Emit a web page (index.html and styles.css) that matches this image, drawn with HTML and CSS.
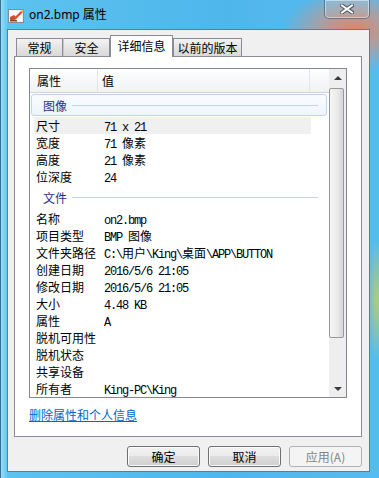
FILE: index.html
```html
<!DOCTYPE html>
<html lang="zh-CN">
<head>
    <meta charset="UTF-8">
    <title>on2.bmp 属性</title>
    <link rel="stylesheet" href="styles.css">
</head>
<body>
    <div class="window">
        <!-- Title bar -->
        <div class="titlebar">
            <svg class="app-icon" width="16" height="16" viewBox="0 0 16 16">
                <rect x="0.5" y="1.5" width="15" height="13" fill="#efefef" stroke="#8c8c8c"/>
                <rect x="2" y="3" width="12" height="10" fill="#fbfbfb"/>
                <path d="M2 13 L2 9 L6 7 L9 10 L4 13 Z" fill="#c9542c"/>
                <path d="M5 11 L13 3 L14.5 4.5 L7 12 Z" fill="#e0482a"/>
                <path d="M13 3 L14.5 1.5 L15.5 2.5 L14.5 4.5 Z" fill="#f2b233"/>
                <rect x="2" y="12" width="7" height="1.5" fill="#8a4a22"/>
            </svg>
            <span class="title">on2.bmp 属性</span>
            <div class="close">
                <svg width="14" height="10" viewBox="0 0 14 10">
                    <path d="M2 1.5 L12 8.5 M12 1.5 L2 8.5" stroke="#4d5660" stroke-width="4" stroke-linecap="square"/>
                    <path d="M2 1.5 L12 8.5 M12 1.5 L2 8.5" stroke="#ffffff" stroke-width="2" stroke-linecap="square"/>
                </svg>
            </div>
        </div>

        <div class="client">
            <!-- Tabs -->
            <div class="tabs">
                <div class="tab t1">常规</div>
                <div class="tab t2">安全</div>
                <div class="tab active">详细信息</div>
                <div class="tab t4">以前的版本</div>
            </div>

            <div class="panel">
                <div class="listbox">
                    <div class="list">
                        <div class="head">
                            <div class="col-name">属性</div>
                            <div class="col-val">值</div>
                            <div class="col-rest"></div>
                        </div>

                        <div class="group boxed"><span>图像</span><i></i></div>
                        <div class="row hover"><div class="k">尺寸</div><div class="v"><span class="en">71 x 21</span></div></div>
                        <div class="row"><div class="k">宽度</div><div class="v"><span class="en">71 </span>像素</div></div>
                        <div class="row"><div class="k">高度</div><div class="v"><span class="en">21 </span>像素</div></div>
                        <div class="row"><div class="k">位深度</div><div class="v"><span class="en">24</span></div></div>

                        <div class="group gap"><span>文件</span><i></i></div>
                        <div class="row"><div class="k">名称</div><div class="v"><span class="en">on2.bmp</span></div></div>
                        <div class="row"><div class="k">项目类型</div><div class="v"><span class="en">BMP </span>图像</div></div>
                        <div class="row"><div class="k">文件夹路径</div><div class="v"><span class="en">C:\</span>用户<span class="en">\King\</span>桌面<span class="en">\APP\BUTTON</span></div></div>
                        <div class="row"><div class="k">创建日期</div><div class="v"><span class="en">2016/5/6 21:05</span></div></div>
                        <div class="row"><div class="k">修改日期</div><div class="v"><span class="en">2016/5/6 21:05</span></div></div>
                        <div class="row"><div class="k">大小</div><div class="v"><span class="en">4.48 KB</span></div></div>
                        <div class="row"><div class="k">属性</div><div class="v"><span class="en">A</span></div></div>
                        <div class="row"><div class="k">脱机可用性</div><div class="v"></div></div>
                        <div class="row"><div class="k">脱机状态</div><div class="v"></div></div>
                        <div class="row"><div class="k">共享设备</div><div class="v"></div></div>
                        <div class="row"><div class="k">所有者</div><div class="v"><span class="en">King-PC\King</span></div></div>
                    </div>

                    <div class="scrollbar">
                        <div class="arrow"><b class="up"></b></div>
                        <div class="thumb"></div>
                        <div class="track"></div>
                        <div class="arrow"><b class="down"></b></div>
                    </div>
                </div>
                <a class="link" href="#">删除属性和个人信息</a>
            </div>

            <!-- Dialog buttons -->
            <div class="buttons">
                <button class="btn">确定</button>
                <button class="btn">取消</button>
                <button class="btn disabled">应用(A)</button>
            </div>
        </div>
    </div>
</body>
</html>
```

FILE: styles.css
```css
body {
    margin: 0;
    padding: 0;
    font-family: "Noto Sans CJK SC", "Noto Sans", sans-serif;
    font-size: 12px;
    color: #000;
}

.window {
    width: 379px;
    height: 478px;
    box-sizing: border-box;
    overflow: hidden;
    border-left: 1px solid #3c6f90;
    background:
        radial-gradient(70px 40px at 352px 30px, rgba(230, 128, 98, 0.95) 0%, rgba(232, 140, 108, 0.6) 45%, rgba(232, 140, 108, 0) 100%),
        radial-gradient(10px 60px at 376px 300px, rgba(200, 210, 90, 0.8), rgba(200, 210, 90, 0)),
        linear-gradient(to right, #8fe0f6 0px, #5cc2ef 7px, #4fb6ec 60%, #58bbee 100%);
}

/* title bar */

.titlebar {
    height: 29px;
    display: flex;
    align-items: flex-start;
}

.app-icon {
    margin: 8px 0 0 7px;
}

.title {
    margin: 6px 0 0 5px;
    font-family: "Noto Sans", "Noto Sans CJK SC", sans-serif;
    font-size: 12px;
    line-height: 17px;
    color: #000;
}

.close {
    margin-left: auto;
    margin-right: 9px;
    width: 44px;
    height: 18px;
    border: 1px solid rgba(40, 70, 100, 0.55);
    border-top: none;
    border-radius: 0 0 5px 5px;
    box-shadow: inset 0 0 0 1px rgba(255, 255, 255, 0.45);
    background: linear-gradient(rgba(255, 255, 255, 0.15), rgba(255, 255, 255, 0.05));
    display: flex;
    align-items: center;
    justify-content: center;
}

/* client area */

.client {
    width: 363px;
    height: 443px;
    box-sizing: border-box;
    margin-left: 6px;
    border: 1px solid #6c7985;
    background-color: #f0f0f0;
    padding: 5px 7px 0 6px;
}

.tabs {
    display: flex;
    align-items: flex-end;
    height: 21px;
    padding-left: 2px;
    position: relative;
    z-index: 1;
}

.tab {
    height: 18px;
    box-sizing: border-box;
    border: 1px solid #898c95;
    border-bottom: none;
    background: linear-gradient(#f3f3f3, #e5e5e5 50%, #d9d9d9);
    text-align: center;
    line-height: 17px;
    margin-bottom: 0;
}

.t1 { width: 47px; }
.t2 { width: 47px; border-left-color: #c8c8c8; }
.t4 { width: 69px; }

.tab.active {
    width: 63px;
    height: 22px;
    background: #fff;
    margin-bottom: -1px;
    line-height: 20px;
}

.panel {
    width: 348px;
    height: 381px;
    box-sizing: border-box;
    border: 1px solid #898c95;
    background: #fff;
    padding: 11px 0 0 14px;
}

/* details list */

.listbox {
    width: 318px;
    height: 330px;
    box-sizing: border-box;
    border: 1px solid #828790;
    display: flex;
}

.list {
    flex: 1;
    overflow: hidden;
}

.head {
    height: 23px;
    border-bottom: 1px solid #d5d5d5;
    background: linear-gradient(#ffffff, #f7f8f9 50%, #f1f2f4);
    display: flex;
    line-height: 24px;
}

.col-name {
    width: 68px;
    padding-left: 7px;
    box-sizing: border-box;
    border-right: 1px solid #e3e5e8;
}

.col-val {
    width: 212px;
    padding-left: 4px;
    box-sizing: border-box;
    border-right: 1px solid #e3e5e8;
}

.col-rest {
    flex: 1;
}

.group {
    height: 24px;
    display: flex;
    align-items: center;
    padding: 0 11px 0 13px;
    color: #1e3287;
}

.group i {
    flex: 1;
    height: 1px;
    margin-left: 5px;
    background: #c4d6ee;
}

.group.boxed {
    height: 22px;
    margin: 1px 2px 1px 1px;
    padding: 0 8px 0 11px;
    box-sizing: border-box;
    border: 1px solid #bcd5f3;
    border-radius: 3px;
    background: linear-gradient(#fafcff, #eef5fd);
}

.group.gap {
    height: 25px;
}

.row {
    height: 17px;
    line-height: 17px;
    margin: 0 18px 0 4px;
    display: flex;
    white-space: nowrap;
}

.row.hover {
    background: #f0f0f0;
}

.k {
    width: 70px;
    padding-left: 2px;
    box-sizing: border-box;
}

.v {
    flex: 1;
}

.en {
    font-family: "Liberation Mono", monospace;
    font-size: 12px;
    letter-spacing: -1.2px;
    white-space: pre;
}

/* scrollbar */

.scrollbar {
    width: 17px;
    background: #eeeeee;
    display: flex;
    flex-direction: column;
}

.arrow {
    height: 17px;
    display: flex;
    align-items: center;
    justify-content: center;
}

.up, .down {
    width: 0;
    height: 0;
    border-left: 4px solid transparent;
    border-right: 4px solid transparent;
}

.up { border-bottom: 4px solid #3a3a3a; }
.down { border-top: 4px solid #3a3a3a; }

.thumb {
    height: 250px;
    width: 15px;
    margin-top: 2px;
    box-sizing: border-box;
    border: 1px solid #979797;
    border-radius: 2px;
    background: linear-gradient(to right, #f5f5f5, #ebebeb 55%, #d4d4d4);
}

.track {
    flex: 1;
}

.link {
    display: inline-block;
    margin-top: 9px;
    color: #0066cc;
    line-height: 16px;
    text-decoration: underline;
}

/* buttons */

.buttons {
    display: flex;
    justify-content: flex-end;
    gap: 8px;
    margin-top: 9px;
}

.btn {
    width: 73px;
    height: 21px;
    padding: 0;
    font-family: "Noto Sans CJK SC", sans-serif;
    font-size: 12px;
    color: #000;
    border: 1px solid #707070;
    border-radius: 3px;
    background: linear-gradient(#f2f2f2, #ebebeb 50%, #dddddd 50%, #cfcfcf);
    box-shadow: inset 0 0 0 1px #fbfbfb;
}

.btn.disabled {
    border-color: #adb2b5;
    background: #f4f4f4;
    color: #838383;
    box-shadow: none;
}
```
